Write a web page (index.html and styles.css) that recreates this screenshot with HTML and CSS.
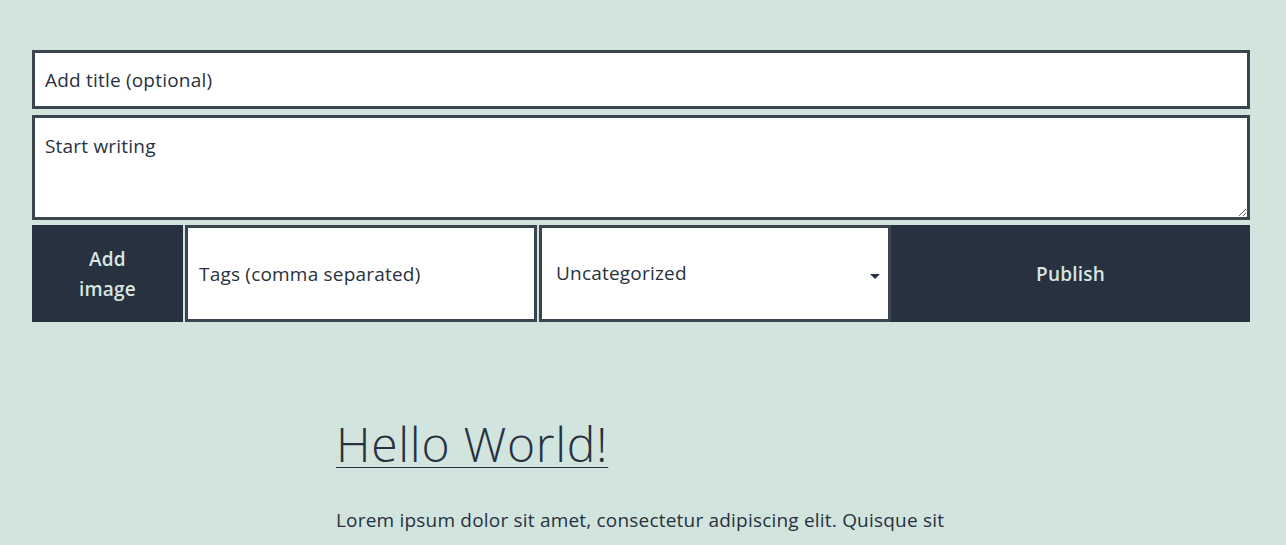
FILE: index.html
```html
<!DOCTYPE html>
<html>
<head>
<meta charset="utf-8">
<link rel="stylesheet" href="styles.css">
</head>
<body>
<form class="composer">
  <input class="field title" type="text" placeholder="Add title (optional)">
  <textarea class="field body" placeholder="Start writing"></textarea>
  <div class="row">
    <button type="button" class="btn add">Add<br>image</button>
    <input class="field tags" type="text" placeholder="Tags (comma separated)">
    <div class="select">
      <span>Uncategorized</span>
      <svg class="caret" width="10" height="5" viewBox="0 0 10 5"><path d="M0 0h10L5 5z" fill="#283140"/></svg>
    </div>
    <button type="button" class="btn publish">Publish</button>
  </div>
</form>
<main class="posts">
  <article class="post">
    <h2 class="post-title"><a href="#">Hello World!</a></h2>
    <p class="post-text">Lorem ipsum dolor sit amet, consectetur adipiscing elit. Quisque sit</p>
  </article>
</main>
</body>
</html>
```

FILE: styles.css
```css
html, body { margin: 0; padding: 0; }
body {
  background: #d1e4de;
  font-family: "Open Sans", "Noto Sans", sans-serif;
  color: #283140;
  overflow: hidden;
}
.composer {
  width: 1218px;
  margin: 50px 0 0 32px;
  display: flex;
  flex-direction: column;
  gap: 6px;
}
.field {
  box-sizing: border-box;
  border: 3px solid #3a4550;
  background: #fff;
  font-family: inherit;
  font-size: 19px;
  letter-spacing: 0.2px;
  color: #283140;
  padding: 0 10px;
  outline: none;
  margin: 0;
}
.field::placeholder { color: #283140; opacity: 1; }
.title { height: 59px; }
.body { height: 105px; padding-top: 15px; resize: vertical; display: block; }
.row {
  display: flex;
  height: 97px;
  gap: 2px;
  margin-top: -1px;
}
.btn {
  border: none;
  background: #283140;
  color: #d7e6e1;
  font-family: inherit;
  font-size: 19px;
  letter-spacing: 0.2px;
  font-weight: 600;
  line-height: 30px;
  margin: 0;
  padding: 0;
}
.add { width: 151px; }
.tags { width: 352px; height: 97px; padding-left: 11px; }
.select {
  box-sizing: border-box;
  width: 352px;
  height: 97px;
  border: 3px solid #3a4550;
  background: #fff;
  display: flex;
  align-items: center;
  justify-content: space-between;
  padding: 0 8px 0 14px;
  font-size: 19px;
  letter-spacing: 0.2px;
}
.select span { margin-top: -1px; }
.caret { margin-top: 6px; }
.publish { flex: 1; margin-left: -2px; }
.posts {
  padding-left: 336px;
  margin-top: 92px;
}
.post-title {
  margin: 0;
  font-size: 48px;
  letter-spacing: 0.7px;
  font-weight: 300;
  line-height: 60px;
}
.post-title a {
  color: #283140;
  text-decoration: underline;
  text-decoration-thickness: 1px;
  text-underline-offset: 5px;
}
.post-text {
  margin: 31px 0 0;
  font-size: 19px;
  letter-spacing: 0.2px;
  line-height: 30px;
}
```
